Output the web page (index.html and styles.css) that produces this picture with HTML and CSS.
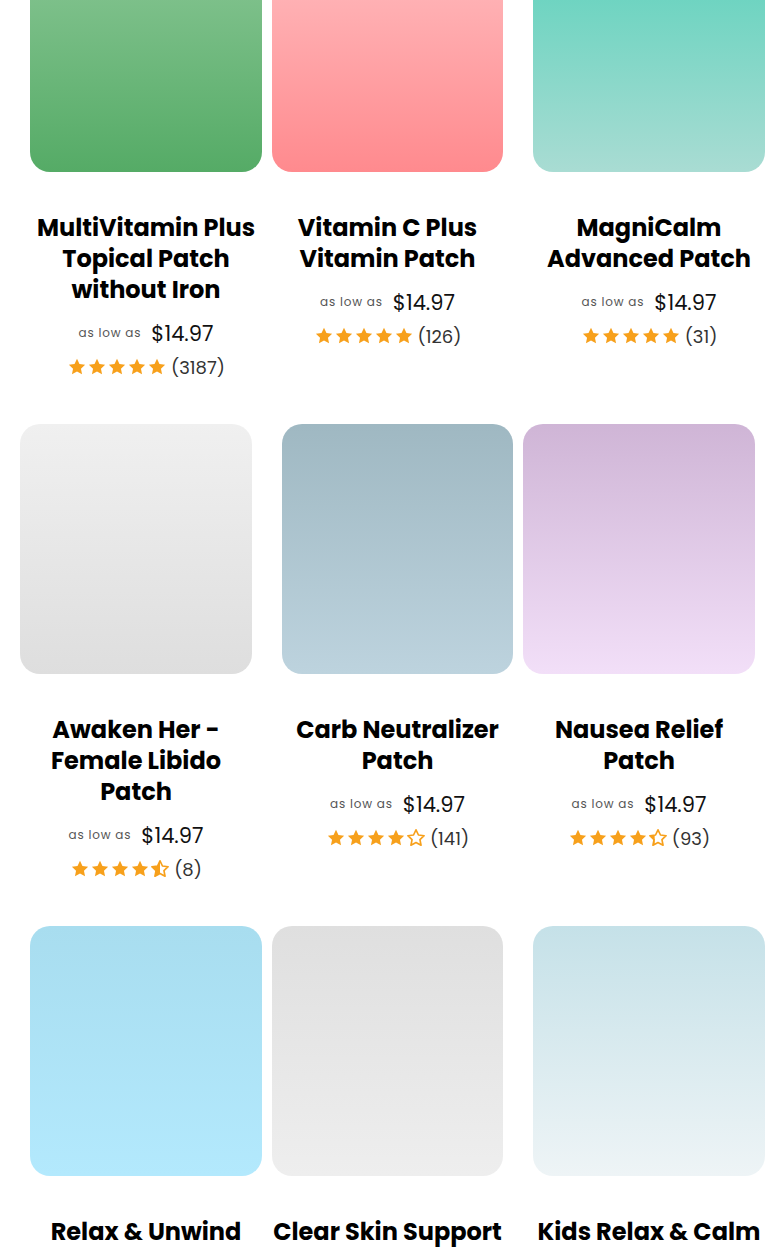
FILE: index.html
```html
<!DOCTYPE html>
<html lang="en">
<head>
<meta charset="utf-8">
<title>Patches</title>
<link rel="stylesheet" href="styles.css">
</head>
<body>
<svg class="defs" width="0" height="0" aria-hidden="true">
  <defs>
    <path id="star" d="M12 2.2l2.95 6.2 6.8.85-5 4.7 1.3 6.75L12 17.4l-6.05 3.3 1.3-6.75-5-4.7 6.8-.85z"/>
    <clipPath id="half"><rect x="0" y="0" width="12" height="24"/></clipPath>
    <clipPath id="third"><rect x="0" y="0" width="8" height="24"/></clipPath>
  </defs>
</svg>
<main class="grid">
  <article class="card end">
    <div class="img g-green"></div>
    <h3 class="title">MultiVitamin Plus Topical Patch without Iron</h3>
    <div class="price"><span class="low">as low as</span><span class="amt">$14.97</span></div>
    <div class="rating">
      <span class="stars">
        <svg viewBox="0 0 24 24"><use href="#star" class="fill"/></svg>
        <svg viewBox="0 0 24 24"><use href="#star" class="fill"/></svg>
        <svg viewBox="0 0 24 24"><use href="#star" class="fill"/></svg>
        <svg viewBox="0 0 24 24"><use href="#star" class="fill"/></svg>
        <svg viewBox="0 0 24 24"><use href="#star" class="fill"/></svg>
      </span><span class="count">(3187)</span>
    </div>
  </article>
  <article class="card start">
    <div class="img g-pink"></div>
    <h3 class="title">Vitamin C Plus Vitamin Patch</h3>
    <div class="price"><span class="low">as low as</span><span class="amt">$14.97</span></div>
    <div class="rating">
      <span class="stars">
        <svg viewBox="0 0 24 24"><use href="#star" class="fill"/></svg>
        <svg viewBox="0 0 24 24"><use href="#star" class="fill"/></svg>
        <svg viewBox="0 0 24 24"><use href="#star" class="fill"/></svg>
        <svg viewBox="0 0 24 24"><use href="#star" class="fill"/></svg>
        <svg viewBox="0 0 24 24"><use href="#star" class="fill"/></svg>
      </span><span class="count">(126)</span>
    </div>
  </article>
  <article class="card end">
    <div class="img g-teal"></div>
    <h3 class="title">MagniCalm Advanced Patch</h3>
    <div class="price"><span class="low">as low as</span><span class="amt">$14.97</span></div>
    <div class="rating">
      <span class="stars">
        <svg viewBox="0 0 24 24"><use href="#star" class="fill"/></svg>
        <svg viewBox="0 0 24 24"><use href="#star" class="fill"/></svg>
        <svg viewBox="0 0 24 24"><use href="#star" class="fill"/></svg>
        <svg viewBox="0 0 24 24"><use href="#star" class="fill"/></svg>
        <svg viewBox="0 0 24 24"><use href="#star" class="fill"/></svg>
      </span><span class="count">(31)</span>
    </div>
  </article>

  <article class="card start">
    <div class="img g-grey"></div>
    <h3 class="title">Awaken Her - Female Libido Patch</h3>
    <div class="price"><span class="low">as low as</span><span class="amt">$14.97</span></div>
    <div class="rating">
      <span class="stars">
        <svg viewBox="0 0 24 24"><use href="#star" class="fill"/></svg>
        <svg viewBox="0 0 24 24"><use href="#star" class="fill"/></svg>
        <svg viewBox="0 0 24 24"><use href="#star" class="fill"/></svg>
        <svg viewBox="0 0 24 24"><use href="#star" class="fill"/></svg>
        <svg viewBox="0 0 24 24"><use href="#star" class="outline"/><use href="#star" class="fill" clip-path="url(#half)"/></svg>
      </span><span class="count">(8)</span>
    </div>
  </article>
  <article class="card end">
    <div class="img g-slate"></div>
    <h3 class="title">Carb Neutralizer Patch</h3>
    <div class="price"><span class="low">as low as</span><span class="amt">$14.97</span></div>
    <div class="rating">
      <span class="stars">
        <svg viewBox="0 0 24 24"><use href="#star" class="fill"/></svg>
        <svg viewBox="0 0 24 24"><use href="#star" class="fill"/></svg>
        <svg viewBox="0 0 24 24"><use href="#star" class="fill"/></svg>
        <svg viewBox="0 0 24 24"><use href="#star" class="fill"/></svg>
        <svg viewBox="0 0 24 24"><use href="#star" class="outline"/></svg>
      </span><span class="count">(141)</span>
    </div>
  </article>
  <article class="card start">
    <div class="img g-lilac"></div>
    <h3 class="title">Nausea Relief Patch</h3>
    <div class="price"><span class="low">as low as</span><span class="amt">$14.97</span></div>
    <div class="rating">
      <span class="stars">
        <svg viewBox="0 0 24 24"><use href="#star" class="fill"/></svg>
        <svg viewBox="0 0 24 24"><use href="#star" class="fill"/></svg>
        <svg viewBox="0 0 24 24"><use href="#star" class="fill"/></svg>
        <svg viewBox="0 0 24 24"><use href="#star" class="fill"/></svg>
        <svg viewBox="0 0 24 24"><use href="#star" class="outline"/><use href="#star" class="fill" clip-path="url(#third)"/></svg>
      </span><span class="count">(93)</span>
    </div>
  </article>

  <article class="card end">
    <div class="img g-sky"></div>
    <h3 class="title">Relax &amp; Unwind</h3>
  </article>
  <article class="card start">
    <div class="img g-mist"></div>
    <h3 class="title">Clear Skin Support</h3>
  </article>
  <article class="card end">
    <div class="img g-ice"></div>
    <h3 class="title">Kids Relax &amp; Calm</h3>
  </article>
</main>
</body>
</html>
```

FILE: styles.css
```css
* { box-sizing: border-box; }

html, body {
  margin: 0;
  padding: 0;
  background: #ffffff;
}

body {
  font-family: "Poppins", "Inter", "Noto Sans", sans-serif;
  color: #111;
  overflow: hidden;
}

.defs {
  position: absolute;
  width: 0;
  height: 0;
}

.grid {
  display: grid;
  grid-template-columns: 242px 241px 242px;
  column-gap: 10px;
  row-gap: 45px;
  padding-left: 20px;
  margin-top: -78px;
}

.card {
  width: calc(100% - 10px);
  display: flex;
  flex-direction: column;
  align-items: center;
  text-align: center;
}
.card.start { justify-self: start; }
.card.end { justify-self: end; }

.img {
  width: 100%;
  height: 250px;
  border-radius: 20px;
}

.g-green { background: linear-gradient(180deg, #9ed0a6 0%, #7dc08a 30%, #55ab66 100%); }
.g-pink  { background: linear-gradient(180deg, #ffc8ca 0%, #ffb1b4 30%, #ff8a8e 100%); }
.g-teal  { background: linear-gradient(180deg, #56cfb8 0%, #6ed4c1 30%, #a9dcd3 100%); }
.g-grey  { background: linear-gradient(180deg, #f0f0f0 0%, #dedede 100%); }
.g-slate { background: linear-gradient(180deg, #9fb8c2 0%, #bdd3de 100%); }
.g-lilac { background: linear-gradient(180deg, #cfb5d6 0%, #f2dff8 100%); }
.g-sky   { background: linear-gradient(180deg, #a8ddef 0%, #b3e9fd 100%); }
.g-mist  { background: linear-gradient(180deg, #dfdfdf 0%, #eeeeee 100%); }
.g-ice   { background: linear-gradient(180deg, #c5e1e8 0%, #eef4f6 100%); }

.title {
  margin: 40px 0 0;
  font-size: 24px;
  line-height: 31px;
  font-weight: 700;
  color: #000;
  letter-spacing: 0;
}

.price {
  margin-top: 16px;
  height: 24px;
  display: flex;
  align-items: center;
  gap: 10px;
}
.low {
  font-size: 12px;
  color: #555;
  letter-spacing: 0.8px;
}
.amt {
  font-size: 21px;
  color: #111;
}

.rating {
  margin-top: 10px;
  height: 24px;
  display: flex;
  align-items: center;
  gap: 4px;
}
.stars {
  display: flex;
  gap: 0;
}
.stars svg {
  width: 20px;
  height: 20px;
  display: block;
}
.fill { fill: #f7a01b; }
.outline {
  fill: none;
  stroke: #f7a01b;
  stroke-width: 2;
  stroke-linejoin: round;
}
.count {
  font-size: 18px;
  color: #333;
  letter-spacing: 0;
}
```
